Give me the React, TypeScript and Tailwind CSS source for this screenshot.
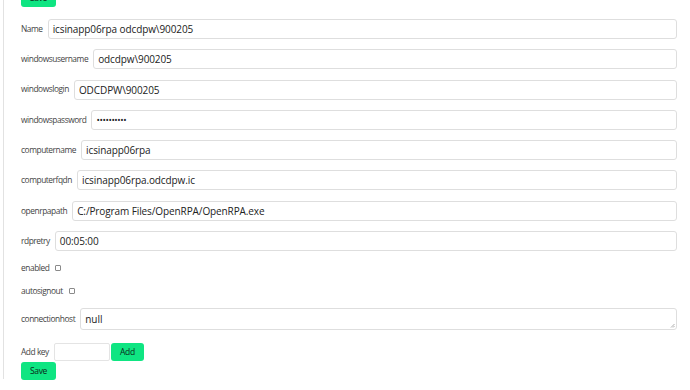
import React from "react";

const fields = [
  { label: "Name", value: "icsinapp06rpa odcdpw\\900205" },
  { label: "windowsusername", value: "odcdpw\\900205" },
  { label: "windowslogin", value: "ODCDPW\\900205" },
  { label: "windowspassword", value: "••••••••••", password: true },
  { label: "computername", value: "icsinapp06rpa" },
  { label: "computerfqdn", value: "icsinapp06rpa.odcdpw.ic" },
  { label: "openrpapath", value: "C:/Program Files/OpenRPA/OpenRPA.exe" },
  { label: "rdpretry", value: "00:05:00" },
];

const labelCls = "text-[#444] text-[8.4px] tracking-[-0.45px]";

const Field = ({ label, value, password }: { label: string; value: string; password?: boolean }) => (
  <div className="flex items-center h-[20px] mb-[10.3px]">
    <span className={`mr-[5px] ${labelCls}`}>{label}</span>
    <div className="flex-1 h-[20px] border border-[#dedede] rounded-[3px] bg-white flex items-center px-[4px] text-[#222] text-[10px] tracking-[-0.1px]">
      <span className={password ? "text-[9px] tracking-[-0.4px]" : ""}>{value}</span>
    </div>
  </div>
);

const Check = ({ label }: { label: string }) => (
  <div className="flex items-center h-[14px]">
    <span className={`mr-[6px] ${labelCls}`}>{label}</span>
    <span className="w-[6px] h-[6px] border border-[#8a8a8a] rounded-[1px] bg-white" />
  </div>
);

export default function App() {
  return (
    <div
      className="w-[690px] h-[390px] bg-white overflow-hidden leading-none"
      style={{ fontFamily: "'Open Sans', 'Noto Sans', sans-serif" }}
    >
      <div className="ml-[3px] border-l border-[#e2e2e2] h-full pl-[17px] pr-[13px]">
        <div className="-mt-[11px] mb-[12px] w-[35px] h-[18px] rounded-[3px] bg-[#0fe582] flex items-center justify-center text-[#0b2a1a] text-[8.5px] tracking-[-0.3px]">
          Save
        </div>
        {fields.map((f) => (
          <Field key={f.label} {...f} />
        ))}
        <div className="mt-[0.7px]" />
        <Check label="enabled" />
        <div className="h-[9px]" />
        <Check label="autosignout" />
        <div className="flex items-center h-[22px] mt-[10px]">
          <span className={`mr-[5px] ${labelCls}`}>connectionhost</span>
          <div className="relative flex-1 h-[22px] border border-[#dedede] rounded-[3px] bg-white flex items-center px-[4px] text-[#222] text-[10px]">
            null
            <svg className="absolute right-[1px] bottom-[1px]" width="5" height="5" viewBox="0 0 5 5">
              <path d="M4.5 1 L1 4.5 M4.5 3 L3 4.5" stroke="#999" strokeWidth="0.8" />
            </svg>
          </div>
        </div>
        <div className="flex items-center h-[18px] mt-[13px]">
          <span className={`mr-[5px] ${labelCls}`}>Add key</span>
          <div className="w-[56px] h-[18px] border border-[#e4e4e4] rounded-[2px] bg-white" />
          <div className="ml-[1px] w-[33px] h-[18px] rounded-[3px] bg-[#0fe582] flex items-center justify-center text-[#0b2a1a] text-[8.5px] tracking-[-0.3px]">
            Add
          </div>
        </div>
        <div className="mt-[1px] w-[35px] h-[18px] rounded-[3px] bg-[#0fe582] flex items-center justify-center text-[#0b2a1a] text-[8.5px] tracking-[-0.3px]">
          Save
        </div>
      </div>
    </div>
  );
}
